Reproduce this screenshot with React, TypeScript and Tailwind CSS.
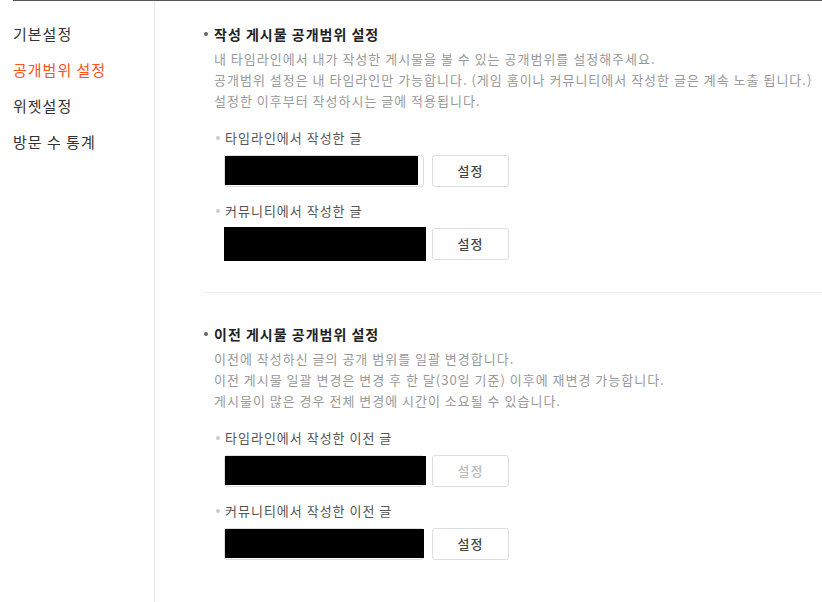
const FONT = { fontFamily: '"Noto Sans CJK KR", "Noto Sans", sans-serif' };

const menu = [
  { label: "기본설정", active: false },
  { label: "공개범위 설정", active: true },
  { label: "위젯설정", active: false },
  { label: "방문 수 통계", active: false },
];

type Row = { label: string; redact: string; disabled?: boolean };

function SettingRow({ row, first }: { row: Row; first?: boolean }) {
  return (
    <div className={first ? "mt-[17px]" : "mt-[14px]"}>
      <div className="flex items-center h-[20px] pl-[12px] text-[13px] tracking-[1px] text-[#555]">
        <span className="w-[4px] h-[4px] rounded-full bg-[#ccc] mr-[5px]" />
        {row.label}
      </div>
      <div className="flex mt-[7px] pl-[20px]">
        <div className="relative w-[200px] h-[32px] border border-[#ddd] rounded-[3px] bg-white">
          <div className={`absolute bg-black ${row.redact}`} />
        </div>
        <button
          className={`ml-[8px] w-[77px] h-[32px] border border-[#ddd] rounded-[3px] bg-white text-[13px] font-medium tracking-[1px] ${
            row.disabled ? "text-[#bbb]" : "text-[#444]"
          }`}
        >
          설정
        </button>
      </div>
    </div>
  );
}

function Section({
  title,
  lines,
  rows,
}: {
  title: string;
  lines: string[];
  rows: Row[];
}) {
  return (
    <div>
      <div className="flex items-center h-[20px] text-[14px] font-bold tracking-[1px] text-[#222]">
        <span className="w-[4px] h-[4px] rounded-full bg-[#666] mr-[6px]" />
        {title}
      </div>
      <div className="mt-[4px] pl-[10px] text-[13px] leading-[21px] tracking-[1px] text-[#999]">
        {lines.map((l) => (
          <p key={l} className="whitespace-nowrap">
            {l}
          </p>
        ))}
      </div>
      {rows.map((r, i) => (
        <SettingRow key={r.label} row={r} first={i === 0} />
      ))}
    </div>
  );
}

export default function App() {
  return (
    <div className="w-[822px] h-[602px] bg-white pl-[13px] overflow-hidden" style={FONT}>
      <div className="flex h-full border-t border-[#555]">
        {/* Sidebar */}
        <div className="w-[142px] shrink-0 border-r border-[#e5e5e5] pt-[15px]">
          {menu.map((m) => (
            <div
              key={m.label}
              className={`h-[36px] flex items-center text-[15px] tracking-[1px] ${
                m.active ? "text-[#ff5219]" : "text-[#333]"
              }`}
            >
              {m.label}
            </div>
          ))}
        </div>

        {/* Content */}
        <div className="flex-1 pt-[23px] pl-[49px] overflow-hidden">
          <Section
            title="작성 게시물 공개범위 설정"
            lines={[
              "내 타임라인에서 내가 작성한 게시물을 볼 수 있는 공개범위를 설정해주세요.",
              "공개범위 설정은 내 타임라인만 가능합니다. (게임 홈이나 커뮤니티에서 작성한 글은 계속 노출 됩니다.)",
              "설정한 이후부터 작성하시는 글에 적용됩니다.",
            ]}
            rows={[
              { label: "타임라인에서 작성한 글", redact: "left-0 top-0 w-[193px] h-[29px]" },
              { label: "커뮤니티에서 작성한 글", redact: "-left-[1px] -top-[2px] w-[202px] h-[34px]" },
            ]}
          />

          <div className="mt-[32px] -ml-[1px] border-t border-[#eee]" />

          <div className="mt-[31px]">
            <Section
              title="이전 게시물 공개범위 설정"
              lines={[
                "이전에 작성하신 글의 공개 범위를 일괄 변경합니다.",
                "이전 게시물 일괄 변경은 변경 후 한 달(30일 기준) 이후에 재변경 가능합니다.",
                "게시물이 많은 경우 전체 변경에 시간이 소요될 수 있습니다.",
              ]}
              rows={[
                { label: "타임라인에서 작성한 이전 글", redact: "left-0 top-0 w-[201px] h-[29px]", disabled: true },
                { label: "커뮤니티에서 작성한 이전 글", redact: "left-0 top-0 w-[199px] h-[29px]" },
              ]}
            />
          </div>
        </div>
      </div>
    </div>
  );
}
